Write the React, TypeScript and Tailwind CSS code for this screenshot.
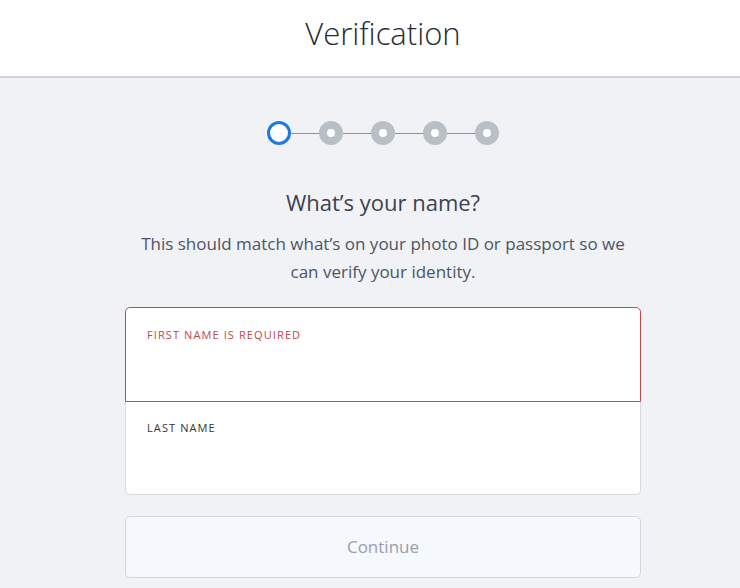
const STEPS = [0, 1, 2, 3, 4]

function Stepper() {
    return (
        <div className="flex items-center justify-center">
            {STEPS.map((i) => (
                <div key={i} className="flex items-center">
                    {i > 0 && <div className="w-[28px] h-px bg-[#8e939b]" />}
                    {i === 0 ? (
                        <div className="w-[24px] h-[24px] rounded-full border-[3px] border-[#1f7ae0] bg-white" />
                    ) : (
                        <div className="w-[24px] h-[24px] rounded-full bg-[#b9bfc7] flex items-center justify-center">
                            <div className="w-[8px] h-[8px] rounded-full bg-white" />
                        </div>
                    )}
                </div>
            ))}
        </div>
    )
}

export default function App() {
    return (
        <div className="w-[740px] h-[588px] overflow-hidden bg-[#f0f2f6] font-['Open_Sans','Liberation_Sans',sans-serif]">
            <div className="h-[78px] pl-[26px] bg-white border-b-2 border-[#cdd1d8] flex items-center justify-center">
                <h1 className="text-[31px] font-light text-[#252a33] -mt-[9px]">Verification</h1>
            </div>

            <div className="pt-[43px] pl-[26px]">
                <Stepper />

                <h2 className="mt-[42px] text-center text-[22px] leading-[30px] text-[#3b4350]">What’s your name?</h2>
                <p className="mt-[13px] mx-auto w-[505px] text-center text-[17px] leading-[28px] text-[#4d5564]">
                    This should match what’s on your photo ID or passport so we can verify your identity.
                </p>

                <div className="mt-[21px] mx-auto w-[516px]">
                    <div className="h-[95px] bg-white border border-[#c8454a] rounded-t-[5px] px-[21px] pt-[13px]">
                        <span className="text-[11px] tracking-[1.1px] text-[#c0474b]">FIRST NAME IS REQUIRED</span>
                    </div>
                    <div className="h-[93px] bg-white border border-t-0 border-[#d6d9de] rounded-b-[5px] px-[21px] pt-[12px]">
                        <span className="text-[11px] tracking-[1.1px] text-[#2f3540]">LAST NAME</span>
                    </div>

                    <button className="mt-[21px] w-full h-[62px] rounded-[5px] border border-[#d3d7dd] bg-[#f5f8fc] text-[17px] text-[#9aa0a9]">
                        Continue
                    </button>
                </div>
            </div>
        </div>
    )
}
